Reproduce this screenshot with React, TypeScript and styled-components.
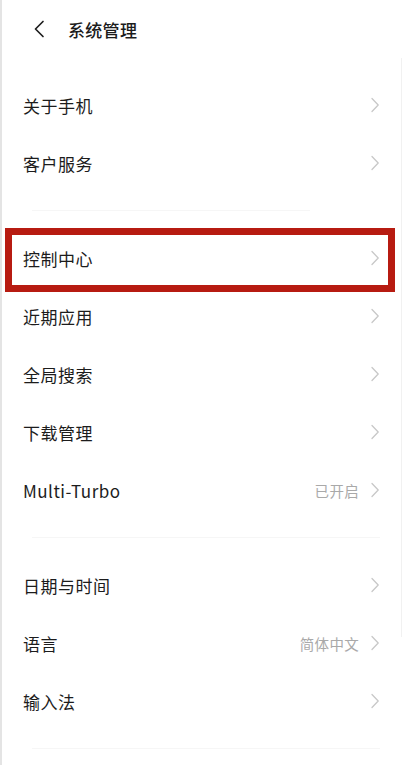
import React from "react"
import styled, { createGlobalStyle } from "styled-components"

const GlobalStyle = createGlobalStyle`
  html, body {
    margin: 0;
    padding: 0;
    background: #ffffff;
  }
  body {
    font-family: "Noto Sans CJK SC", "Noto Sans", sans-serif;
    -webkit-font-smoothing: antialiased;
  }
`

const Page = styled.div`
  position: relative;
  width: 406px;
  min-height: 765px;
  box-sizing: border-box;
  border-left: 2px solid #e4e4e4;
  background: #fff;
  overflow: hidden;

  /* faint edge of the scroll panel on the right */
  &::after {
    content: "";
    position: absolute;
    left: 399px;
    top: 58px;
    width: 1px;
    height: 579px;
    background: #f1f1f1;
  }
`

const Header = styled.header`
  height: 58px;
  display: flex;
  align-items: center;
  padding-left: 27px;
  box-sizing: border-box;
`

const BackButton = styled.button`
  border: 0;
  background: none;
  padding: 0;
  width: 20px;
  height: 20px;
  display: flex;
  align-items: center;
  justify-content: center;
  margin-right: 19px;
  color: #1e1e1e;
`

const Title = styled.h1`
  margin: 0;
  font-size: 17px;
  font-weight: 500;
  color: #1c1c1c;
  letter-spacing: 0.3px;
`

const Group = styled.section<{ $first?: boolean }>`
  padding-top: ${(p) => (p.$first ? "18px" : "0")};
`

const Divider = styled.div<{ $inset?: number }>`
  height: 1px;
  margin: 18px ${(p) => p.$inset ?? 26}px 18px 30px;
  background: #f6f6f6;
`

const Row = styled.div`
  position: relative;
  height: 58px;
  display: flex;
  align-items: center;
  padding: 0 26px 0 21px;
`

const Label = styled.span`
  flex: 1;
  font-size: 17px;
  color: #1c1c1c;
  letter-spacing: 0.5px;
`

const Value = styled.span`
  font-size: 14.5px;
  color: #a9a9a9;
  margin-right: 11px;
  letter-spacing: 0.3px;
`

const Highlight = styled.div`
  position: absolute;
  top: -1px;
  bottom: -5px;
  left: 3px;
  right: 11px;
  border: 7px solid #b71b11;
  pointer-events: none;
`

const Chevron = () => (
  <svg width="10" height="16" viewBox="0 0 10 16" fill="none">
    <path
      d="M2 1.5 L8.2 8 L2 14.5"
      stroke="#c8c8c8"
      strokeWidth="1.3"
      strokeLinecap="round"
      strokeLinejoin="round"
    />
  </svg>
)

const BackIcon = () => (
  <svg width="14" height="18" viewBox="0 0 14 18" fill="none">
    <path
      d="M11 1.5 L3.5 9 L11 16.5"
      stroke="currentColor"
      strokeWidth="1.7"
      strokeLinecap="round"
      strokeLinejoin="round"
    />
  </svg>
)

interface IItem {
  label: string
  value?: string
  highlight?: boolean
}

const groups: IItem[][] = [
  [{ label: "关于手机" }, { label: "客户服务" }],
  [
    { label: "控制中心", highlight: true },
    { label: "近期应用" },
    { label: "全局搜索" },
    { label: "下载管理" },
    { label: "Multi-Turbo", value: "已开启" },
  ],
  [
    { label: "日期与时间" },
    { label: "语言", value: "简体中文" },
    { label: "输入法" },
  ],
]

function SettingRow({ item }: { item: IItem }) {
  return (
    <Row>
      <Label>{item.label}</Label>
      {item.value && <Value>{item.value}</Value>}
      <Chevron />
      {item.highlight && <Highlight />}
    </Row>
  )
}

export default function App() {
  return (
    <>
      <GlobalStyle />
      <Page>
        <Header>
          <BackButton aria-label="back">
            <BackIcon />
          </BackButton>
          <Title>系统管理</Title>
        </Header>
        {groups.map((items, i) => (
          <React.Fragment key={i}>
            <Group $first={i === 0}>
              {items.map((item) => (
                <SettingRow item={item} key={item.label} />
              ))}
            </Group>
            <Divider $inset={i === 0 ? 96 : 26} />
          </React.Fragment>
        ))}
      </Page>
    </>
  )
}
